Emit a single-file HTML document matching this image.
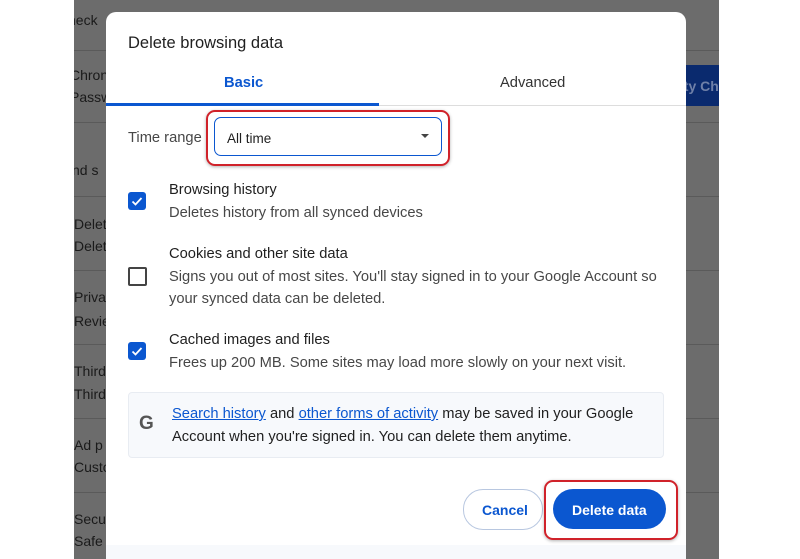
<!DOCTYPE html>
<html><head><style>
html,body{margin:0;width:800px;height:559px;overflow:hidden}
body{background:#fff;position:relative;font-family:"Liberation Sans",sans-serif;}
.bd{position:absolute;left:74px;top:0;width:645px;height:559px;background:#6c6c6c;overflow:hidden}
.bt{position:absolute;left:0;font-size:14px;color:#1a1a1a;white-space:nowrap}
.ln{position:absolute;left:0;width:645px;height:1px;background:#5a5a5a}
.dlg{position:absolute;left:106px;top:12px;width:580px;height:547px;background:#fff;border-radius:10px 10px 0 0;overflow:hidden}
.t{position:absolute;white-space:nowrap;color:#1f1f1f;font-size:14.7px}
.s{color:#474747}
.cb{position:absolute;left:22px;width:18px;height:18px;border-radius:3px;background:#0b57d0}
.cb svg{position:absolute;left:2px;top:2px}
.cbe{position:absolute;left:22px;width:15px;height:15px;border:2px solid #444;border-radius:2px}
a{color:#0b57d0;text-decoration:underline}
</style></head><body>
<div class="bd">
<div class="bt" style="top:12px;left:-6px">heck</div>
<div class="ln" style="top:50px"></div>
<div class="bt" style="top:67px;left:-4px">Chron</div>
<div class="bt" style="top:89px;left:-4px">Passw</div>
<div style="position:absolute;left:612px;top:65px;width:33px;height:41px;background:#0a2a6e"></div>
<div class="bt" style="top:78px;left:602px;color:#6f80a8;font-weight:bold">ety Ch</div>
<div class="ln" style="top:122px"></div>
<div class="bt" style="top:162px;left:-2px">nd s</div>
<div class="ln" style="top:196px"></div>
<div class="bt" style="top:216px">Delet</div>
<div class="bt" style="top:238px">Delet</div>
<div class="ln" style="top:270px"></div>
<div class="bt" style="top:289px">Priva</div>
<div class="bt" style="top:313px">Revie</div>
<div class="ln" style="top:344px"></div>
<div class="bt" style="top:363px">Third</div>
<div class="bt" style="top:386px">Third</div>
<div class="ln" style="top:418px"></div>
<div class="bt" style="top:437px">Ad p</div>
<div class="bt" style="top:459px">Custo</div>
<div class="ln" style="top:492px"></div>
<div class="bt" style="top:511px">Secu</div>
<div class="bt" style="top:533px">Safe</div>
</div>
<div class="dlg">
<div class="t" style="left:22px;top:22px;font-size:16.5px">Delete browsing data</div>
<div class="t" style="left:118px;top:63px;color:#0b57d0;font-weight:bold">Basic</div>
<div class="t" style="left:394px;top:63px;color:#333">Advanced</div>
<div style="position:absolute;left:0;top:93px;width:580px;height:1px;background:#ddd"></div>
<div style="position:absolute;left:0;top:91px;width:273px;height:3px;background:#0b57d0"></div>
<div class="t s" style="left:22px;top:118px">Time range</div>
<div style="position:absolute;left:100px;top:98px;width:240px;height:52px;border:2px solid #d0222a;border-radius:9px;box-shadow:0 1px 3px rgba(0,0,0,.3)"></div>
<div style="position:absolute;left:108px;top:105px;width:226px;height:37px;border:1.5px solid #0b57d0;border-radius:7px"></div>
<div class="t" style="left:121px;top:119px;font-size:13.5px">All time</div>
<div style="position:absolute;left:315px;top:122px;border-left:4px solid transparent;border-right:4px solid transparent;border-top:4px solid #444"></div>
<div class="cb" style="top:180px"><svg width="14" height="14"><path d="M2.5 7.5l3 3 6-6.5" stroke="#fff" stroke-width="1.8" fill="none"/></svg></div>
<div class="t" style="left:63px;top:170px">Browsing history</div>
<div class="t s" style="left:63px;top:193px">Deletes history from all synced devices</div>
<div class="cbe" style="top:255px"></div>
<div class="t" style="left:63px;top:234px">Cookies and other site data</div>
<div class="t s" style="left:63px;top:257px">Signs you out of most sites. You'll stay signed in to your Google Account so</div>
<div class="t s" style="left:63px;top:279px">your synced data can be deleted.</div>
<div class="cb" style="top:330px"><svg width="14" height="14"><path d="M2.5 7.5l3 3 6-6.5" stroke="#fff" stroke-width="1.8" fill="none"/></svg></div>
<div class="t" style="left:63px;top:320px">Cached images and files</div>
<div class="t s" style="left:63px;top:343px">Frees up 200 MB. Some sites may load more slowly on your next visit.</div>
<div style="position:absolute;left:22px;top:380px;width:534px;height:64px;background:#f7f9fc;border:1px solid #e8ecf2;border-radius:4px"></div>
<div class="t" style="left:33px;top:401px;font-size:19px;font-weight:bold;color:#555">G</div>
<div class="t" style="left:66px;top:394px"><a>Search history</a> and <a>other forms of activity</a> may be saved in your Google</div>
<div class="t" style="left:66px;top:417px">Account when you're signed in. You can delete them anytime.</div>
<div style="position:absolute;left:357px;top:477px;width:78px;height:39px;border:1px solid #b8c7e0;border-radius:20px;background:#fff"></div>
<div class="t" style="left:376px;top:490px;color:#0b57d0;font-weight:bold;font-size:14px">Cancel</div>
<div style="position:absolute;left:438px;top:468px;width:130px;height:56px;border:2px solid #d0222a;border-radius:9px;box-shadow:0 1px 3px rgba(0,0,0,.3)"></div>
<div style="position:absolute;left:447px;top:477px;width:113px;height:40px;background:#0b57d0;border-radius:20px"></div>
<div class="t" style="left:466px;top:490px;color:#fff;font-weight:bold;font-size:14px">Delete data</div>
<div style="position:absolute;left:0;top:533px;width:580px;height:30px;background:#f7f9fc"></div>
</div>
</body></html>
